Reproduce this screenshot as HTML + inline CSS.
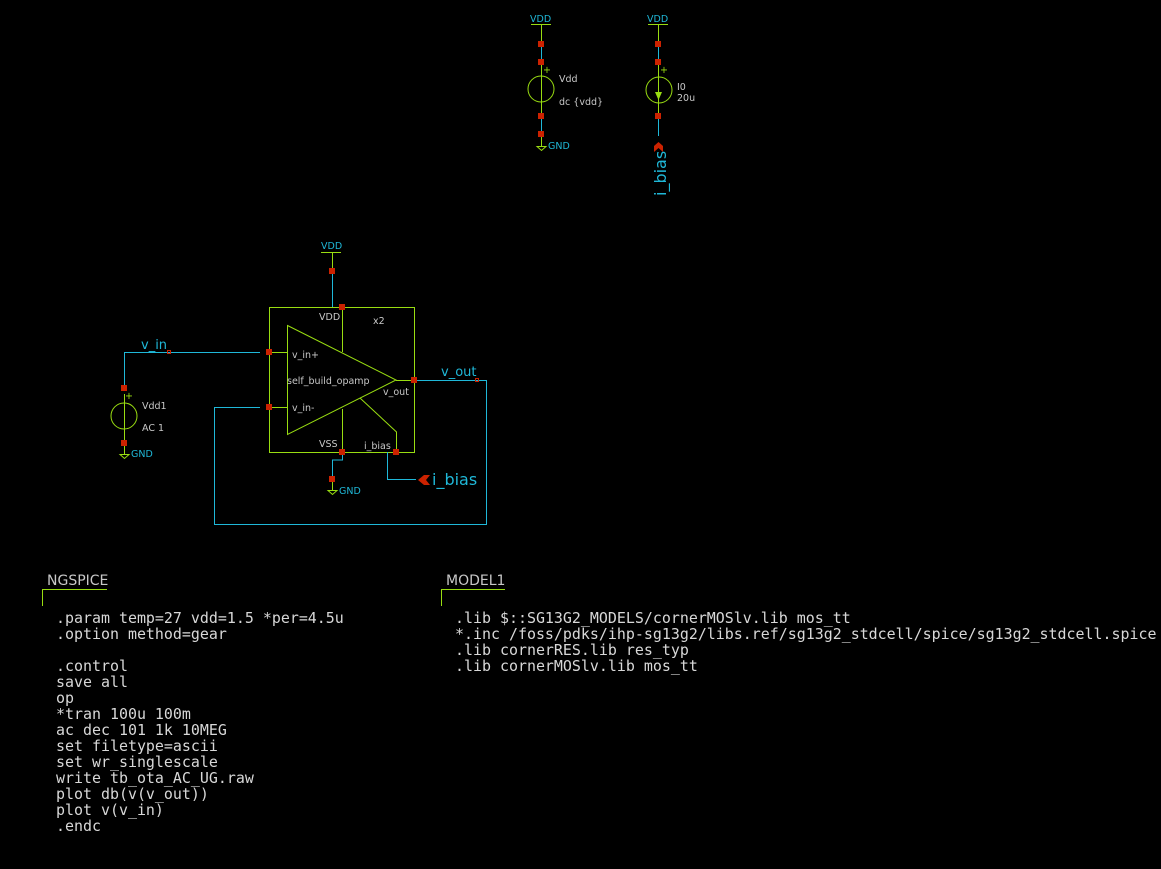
<!DOCTYPE html>
<html><head><meta charset="utf-8"><style>
html,body{margin:0;padding:0;background:#000;width:1161px;height:869px;overflow:hidden}
svg{display:block}
.l{font-family:"DejaVu Sans","Liberation Sans",sans-serif;fill:#c8c8c8;font-size:9.5px}
.c{font-family:"DejaVu Sans","Liberation Sans",sans-serif;fill:#1fb8d8}
.m{font-family:"DejaVu Sans Mono","Liberation Mono",monospace;fill:#d8d8d8;font-size:14.95px;white-space:pre}
</style></head><body>
<svg width="1161" height="869" viewBox="0 0 1161 869" xmlns="http://www.w3.org/2000/svg">
<g fill="none" stroke-width="1">
<g stroke="#99dd11"><line x1="531" y1="24.5" x2="551" y2="24.5"/><line x1="541.5" y1="24" x2="541.5" y2="44"/><line x1="541.5" y1="62" x2="541.5" y2="116"/><circle cx="541" cy="89" r="13"/><line x1="541.5" y1="134" x2="541.5" y2="146"/><path d="M537 146.5h9l-4.5 4z"/></g>
<line x1="541.5" y1="44" x2="541.5" y2="62" stroke="#1fb8d8"/><line x1="541.5" y1="116" x2="541.5" y2="134" stroke="#1fb8d8"/>
<g stroke="#99dd11"><line x1="648" y1="24.5" x2="668" y2="24.5"/><line x1="658.5" y1="24" x2="658.5" y2="44"/><line x1="658.5" y1="62" x2="658.5" y2="116"/><circle cx="659" cy="90" r="13"/><line x1="658.5" y1="80" x2="658.5" y2="98"/></g>
<path d="M655 92h7l-3.5 8z" fill="#99dd11"/>
<line x1="658.5" y1="44" x2="658.5" y2="62" stroke="#1fb8d8"/><line x1="658.5" y1="116" x2="658.5" y2="136" stroke="#1fb8d8"/>
<g stroke="#99dd11"><line x1="321" y1="252.5" x2="341" y2="252.5"/><line x1="332.5" y1="252" x2="332.5" y2="271"/>
<rect x="269.5" y="307.5" width="145" height="145"/>
<path d="M287.5 325.5L396 380L287.5 434.5Z"/>
<line x1="342.5" y1="307" x2="342.5" y2="352"/><line x1="269" y1="352.5" x2="287" y2="352.5"/><line x1="269" y1="407.5" x2="287" y2="407.5"/>
<line x1="396" y1="380.5" x2="414" y2="380.5"/><line x1="342.5" y1="409" x2="342.5" y2="452"/>
<path d="M360 398L396.5 432V452"/>
<line x1="332.5" y1="470" x2="332.5" y2="490"/><path d="M328 490.5h9l-4.5 4z"/>
<line x1="124.5" y1="394" x2="124.5" y2="443"/><circle cx="124" cy="416" r="13"/><line x1="124.5" y1="443" x2="124.5" y2="454"/><path d="M120 454.5h9l-4.5 4z"/>
<path d="M42.5 606V589.5H107"/><path d="M441.5 606V589.5H505"/>
</g>
<g stroke="#1fb8d8">
<line x1="332.5" y1="271" x2="332.5" y2="307"/>
<path d="M260 352.5H124.5V388"/>
<path d="M260 407.5H214.5V524.5H486.5V380.5H414"/>
<path d="M342.5 452V460H332.5V480"/>
<path d="M387.5 452V479.5H416"/>
</g>
</g>
<g fill="#cc2200">
<rect x="538" y="41" width="6" height="6"/><rect x="538" y="59" width="6" height="6"/><rect x="538" y="113" width="6" height="6"/><rect x="538" y="131" width="6" height="6"/>
<rect x="655" y="41" width="6" height="6"/><rect x="655" y="59" width="6" height="6"/><rect x="655" y="113" width="6" height="6"/>
<path d="M654 146l4.5 -4 4.5 4v6l-4.5-4-4.5 4z"/>
<rect x="329" y="268" width="6" height="6"/><rect x="339" y="304" width="6" height="6"/>
<rect x="266" y="349" width="6" height="6"/><rect x="266" y="404" width="6" height="6"/><rect x="411" y="377" width="6" height="6"/>
<rect x="339" y="449" width="6" height="6"/><rect x="393" y="449" width="6" height="6"/><rect x="329" y="476" width="6" height="6"/>
<rect x="121" y="385" width="6" height="6"/><rect x="121" y="440" width="6" height="6"/>
<path d="M418 480l6-5h6l-4 5 4 5h-6z"/>
</g>
<g fill="none" stroke="#cc2200"><rect x="167.5" y="350.5" width="3" height="3"/><rect x="475.5" y="378.5" width="3" height="3"/></g>
<g class="c" font-size="9.5px">
<text x="530" y="22">VDD</text><text x="647" y="22">VDD</text><text x="548" y="149">GND</text>
<text x="321" y="249">VDD</text><text x="339" y="494">GND</text><text x="131" y="457">GND</text>
</g>
<g class="l">
<text x="559" y="82">Vdd</text><text x="559" y="105">dc {vdd}</text><text x="543" y="73" fill="#99dd11">+</text>
<text x="677" y="90">I0</text><text x="677" y="101">20u</text><text x="660" y="73" fill="#99dd11">+</text>
<text x="319" y="320">VDD</text><text x="373" y="324">x2</text><text x="292" y="358">v_in+</text>
<text x="287" y="384">self_build_opamp</text><text x="383" y="395">v_out</text><text x="292" y="411">v_in-</text>
<text x="319" y="447">VSS</text><text x="364" y="449">i_bias</text>
<text x="142" y="409">Vdd1</text><text x="142" y="431">AC 1</text><text x="125" y="399" fill="#99dd11">+</text>
</g>
<text class="c" font-size="13" x="141" y="349">v_in</text>
<text class="c" font-size="13" x="441" y="376">v_out</text>
<text class="c" font-size="16" x="432" y="485">i_bias</text>
<text class="c" font-size="16" transform="translate(666,196) rotate(-90)">i_bias</text>
<text class="l" style="font-size:14px" x="47" y="585">NGSPICE</text>
<text class="l" style="font-size:14px" x="446" y="585">MODEL1</text>
<g class="m">
<text x="56" y="623">.param temp=27 vdd=1.5 *per=4.5u</text>
<text x="56" y="639">.option method=gear</text>
<text x="56" y="671">.control</text>
<text x="56" y="687">save all</text>
<text x="56" y="703">op</text>
<text x="56" y="719">*tran 100u 100m</text>
<text x="56" y="735">ac dec 101 1k 10MEG</text>
<text x="56" y="751">set filetype=ascii</text>
<text x="56" y="767">set wr_singlescale</text>
<text x="56" y="783">write tb_ota_AC_UG.raw</text>
<text x="56" y="799">plot db(v(v_out))</text>
<text x="56" y="815">plot v(v_in)</text>
<text x="56" y="831">.endc</text>
<text x="455" y="623">.lib $::SG13G2_MODELS/cornerMOSlv.lib mos_tt</text>
<text x="455" y="639">*.inc /foss/pdks/ihp-sg13g2/libs.ref/sg13g2_stdcell/spice/sg13g2_stdcell.spice</text>
<text x="455" y="655">.lib cornerRES.lib res_typ</text>
<text x="455" y="671">.lib cornerMOSlv.lib mos_tt</text>
</g>
</svg>
</body></html>
